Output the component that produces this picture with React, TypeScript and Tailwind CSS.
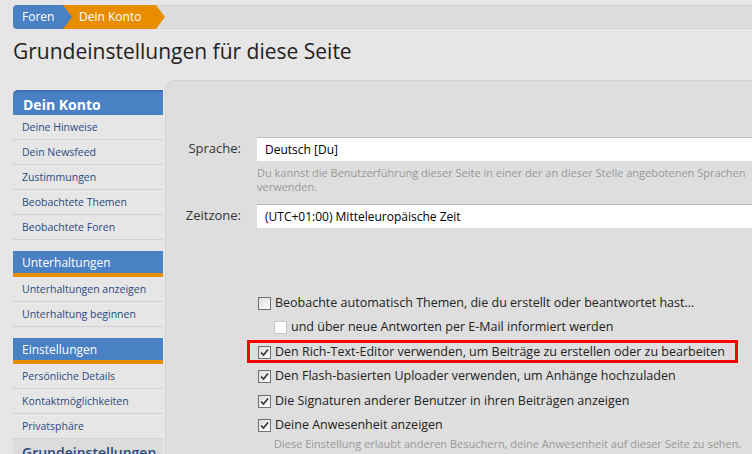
import React from "react";

const groups = [
  {
    title: "Dein Konto",
    big: true,
    items: ["Deine Hinweise", "Dein Newsfeed", "Zustimmungen", "Beobachtete Themen", "Beobachtete Foren"],
  },
  {
    title: "Unterhaltungen",
    items: ["Unterhaltungen anzeigen", "Unterhaltung beginnen"],
  },
  {
    title: "Einstellungen",
    items: ["Persönliche Details", "Kontaktmöglichkeiten", "Privatsphäre"],
  },
];

const options = [
  { label: "Den Rich-Text-Editor verwenden, um Beiträge zu erstellen oder zu bearbeiten", checked: true, marked: true },
  { label: "Den Flash-basierten Uploader verwenden, um Anhänge hochzuladen", checked: true },
  { label: "Die Signaturen anderer Benutzer in ihren Beiträgen anzeigen", checked: true },
  { label: "Deine Anwesenheit anzeigen", checked: true },
];

function Box({ checked, soft }: { checked?: boolean; soft?: boolean }) {
  return (
    <span
      className={`flex h-[13px] w-[13px] shrink-0 items-center justify-center border ${
        soft ? "border-[#c8c8c8] bg-white" : "border-[#6f6f6f] bg-[linear-gradient(135deg,#dcdcdc,#ffffff)]"
      }`}
    >
      {checked && (
        <svg width="9" height="9" viewBox="0 0 9 9">
          <path d="M1 4.5 L3.5 7 L8 1.5" fill="none" stroke="#333" strokeWidth="1.6" />
        </svg>
      )}
    </span>
  );
}

export default function App() {
  return (
    <div className="h-[454px] w-[752px] overflow-hidden bg-[#e6e6e6] font-['Open_Sans',sans-serif]">
      {/* Breadcrumb */}
      <div className="ml-[13px] mt-[5px] flex h-[24px] rounded-l-[4px] border-y border-[#d2d2d2] bg-[#dcdcdc]">
        <div className="z-10 flex h-[24px] w-[59px] -mt-px items-center rounded-l-[4px] bg-[#4a80c4] pl-[9px] text-[12px] text-white [clip-path:polygon(0_0,calc(100%-9px)_0,100%_50%,calc(100%-9px)_100%,0_100%)]">
          Foren
        </div>
        <div className="-ml-[9px] -mt-px flex h-[24px] w-[102px] items-center bg-[#e88c00] pl-[16px] text-[12px] text-white [clip-path:polygon(0_0,calc(100%-9px)_0,100%_50%,calc(100%-9px)_100%,0_100%)]">
          Dein Konto
        </div>
      </div>

      <h1 className="ml-[13px] mt-[6px] h-[45px] text-[21px] leading-[32px] text-[#222]">
        Grundeinstellungen für diese Seite
      </h1>

      <div className="flex">
        {/* Sidebar */}
        <div className="ml-[13px] mt-[10px] w-[150px] shrink-0">
          {groups.map((g) => (
            <div key={g.title} className="mb-[11px]">
              {g.big ? (
                <div className="flex h-[25px] items-end rounded-tl-[5px] border-t-2 border-[#3f6fb0] bg-[#4a80c4] pl-[10px] text-[14px] font-bold leading-[20px] text-white">
                  {g.title}
                </div>
              ) : (
                <div className="flex h-[26px] items-center border-b-[4px] border-[#e88c00] bg-[#4a80c4] pl-[9px] pt-[2px] text-[12px] text-white">
                  {g.title}
                </div>
              )}
              {g.items.map((it) => (
                <div
                  key={it}
                  className="flex h-[25px] items-center border-b border-[#d2d2d2] pl-[9px] pt-[2px] text-[10.5px] text-[#2b4a80]"
                >
                  {it}
                </div>
              ))}
              {g.title === "Einstellungen" && (
                <div className="flex h-[25px] items-center bg-[#dcdcdc] pl-[9px] pt-[2px] text-[14px] font-semibold text-[#2b4a80]">
                  Grundeinstellungen
                </div>
              )}
            </div>
          ))}
        </div>

        {/* Main panel */}
        <div className="ml-[2px] h-[400px] flex-1 rounded-tl-[10px] border-l border-t border-[#d4d4d4] bg-[#dedede] pt-[56px]">
          <div className="flex items-center">
            <div className="w-[75px] text-right text-[13px] text-[#333]">Sprache:</div>
            <div className="ml-[16px] flex h-[24px] w-[520px] items-center border-t border-[#bbb] bg-white pl-[8px] text-[12px] text-black">
              Deutsch [Du]
              <span className="ml-auto mr-[12px] h-[18px] w-[8px] border border-[#999] bg-[#eee]" />
            </div>
          </div>
          <p className="ml-[91px] mt-[5px] w-[490px] text-[11px] leading-[14px] text-[#999]">
            Du kannst die Benutzerführung dieser Seite in einer der an dieser Stelle angebotenen Sprachen verwenden.
          </p>
          <div className="mt-[10px] flex items-center">
            <div className="w-[75px] text-right text-[13px] text-[#333]">Zeitzone:</div>
            <div className="ml-[16px] flex h-[24px] w-[520px] items-center border-t border-[#bbb] bg-white pl-[8px] text-[12px] text-black">
              (UTC+01:00) Mitteleuropäische Zeit
              <span className="ml-auto mr-[12px] h-[18px] w-[8px] border border-[#999] bg-[#eee]" />
            </div>
          </div>

          <div className="ml-[92px] mt-[63px] flex flex-col text-[12.5px] text-[#222]">
            <label className="flex h-[24.5px] items-center gap-[4px]">
              <Box />
              Beobachte automatisch Themen, die du erstellt oder beantwortet hast…
            </label>
            <label className="ml-[16px] flex h-[24.5px] items-center gap-[4px]">
              <Box soft />
              und über neue Antworten per E-Mail informiert werden
            </label>
            {options.map((o) => (
              <label key={o.label} className="relative flex h-[24.5px] items-center gap-[4px]">
                <Box checked={o.checked} />
                {o.label}
                {o.marked && (
                  <span className="absolute left-[-11px] top-[0px] h-[23px] w-[491px] border-[3px] border-[#ff0000]" />
                )}
              </label>
            ))}
            <p className="ml-[16px] -mt-[2px] text-[11px] text-[#999]">
              Diese Einstellung erlaubt anderen Besuchern, deine Anwesenheit auf dieser Seite zu sehen.
            </p>
          </div>
        </div>
      </div>
    </div>
  );
}
